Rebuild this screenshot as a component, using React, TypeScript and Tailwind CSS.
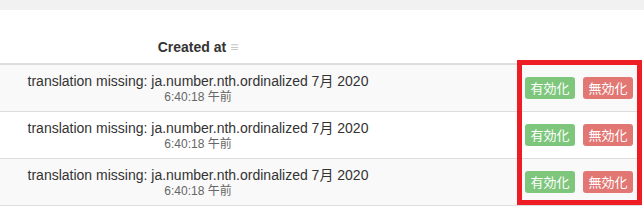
import React from 'react';

const rows = [
    { id: 1, date: 'translation missing: ja.number.nth.ordinalized 7月 2020', time: '6:40:18 午前' },
    { id: 2, date: 'translation missing: ja.number.nth.ordinalized 7月 2020', time: '6:40:18 午前' },
    { id: 3, date: 'translation missing: ja.number.nth.ordinalized 7月 2020', time: '6:40:18 午前' },
];

const App: React.FC = () => {
    return (
        <div
            className="w-[644px] h-[209px] bg-white overflow-hidden text-[#333]"
            style={{ fontFamily: '"Liberation Sans", "Noto Sans CJK JP", sans-serif' }}
        >
            <div className="h-[10px] bg-[#f1f1f1]" />
            <div className="relative w-[641px]">
                <table className="w-full border-collapse text-[14px]">
                    <thead>
                        <tr className="border-b-2 border-[#dddddd]">
                            <th className="w-[396px] h-[54px] px-2 pb-[6px] align-bottom text-center font-bold leading-[20px]">
                                Created at
                                <span className="ml-[4px] text-[14px] font-normal text-[#c8c8c8]">≡</span>
                            </th>
                            <th className="px-2" />
                        </tr>
                    </thead>
                    <tbody>
                        {rows.map((row, i) => (
                            <tr key={row.id} className={`h-[47px] border-b border-[#dddddd] ${i % 2 === 0 ? 'bg-[#f9f9f9]' : 'bg-white'}`}>
                                <td className="px-2 pt-[8px] pb-[7px] text-center align-top">
                                    <div className="leading-[17px] whitespace-nowrap">{row.date}</div>
                                    <div className="text-[12px] leading-[14px] text-[#666]">{row.time}</div>
                                </td>
                                <td className="px-2 text-right align-middle whitespace-nowrap">
                                    <span className="inline-flex items-center justify-center w-[50px] h-[22px] rounded-[3px] bg-[#7dc67b] text-white text-[13px] leading-none">有効化</span>
                                    <span className="inline-flex items-center justify-center w-[50px] h-[22px] ml-[8px] rounded-[3px] bg-[#e17673] text-white text-[13px] leading-none">無効化</span>
                                </td>
                            </tr>
                        ))}
                    </tbody>
                </table>
                {/* highlight box */}
                <div className="absolute left-[517px] top-[50px] w-[125px] h-[145px] border-[5px] border-[#ee1c25] pointer-events-none" />
            </div>
        </div>
    );
};

export default App;
